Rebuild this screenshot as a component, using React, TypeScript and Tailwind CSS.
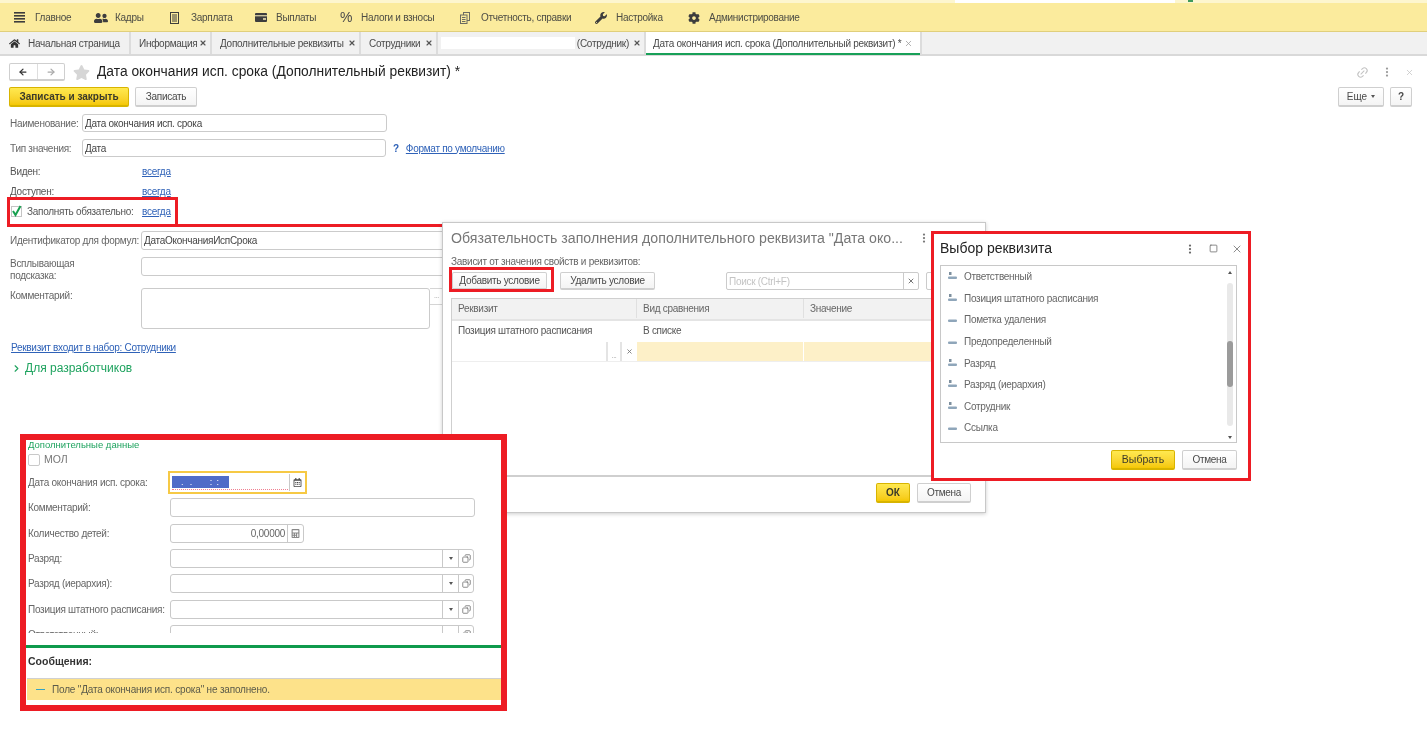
import React from 'react';
import { ArrowLeft, ArrowRight, ChevronRight, Copy, EllipsisVertical, Link2, Square, X } from 'lucide-react';
import { FaCalculator, FaCog, FaHome, FaRegCalendarAlt, FaStar, FaUserFriends, FaWrench } from 'react-icons/fa';

const NAV_ITEMS = [
  { label: 'Главное', width: 'w-[80px]', icon: <BarsIcon /> },
  { label: 'Кадры', width: 'w-[76px]', icon: <FaUserFriends size={14} className="text-[#3d3d3d]" /> },
  { label: 'Зарплата', width: 'w-[85px]', icon: <SheetIcon /> },
  { label: 'Выплаты', width: 'w-[85px]', icon: <CardIcon /> },
  { label: 'Налоги и взносы', width: 'w-[120px]', icon: <span className="text-[14px] tracking-normal text-[#4a4a4a]">%</span> },
  { label: 'Отчетность, справки', width: 'w-[135px]', icon: <DocsIcon /> },
  { label: 'Настройка', width: 'w-[93px]', icon: <FaWrench size={12} className="text-[#3d3d3d]" /> },
  { label: 'Администрирование', width: 'w-[120px]', icon: <FaCog size={12} className="text-[#3d3d3d]" /> },
];

const TABS = [
  { label: 'Информация', width: 'w-[81px]' },
  { label: 'Дополнительные реквизиты', width: 'w-[149px]' },
  { label: 'Сотрудники', width: 'w-[77px]' },
];

const ATTRIBUTES = [
  { name: 'Ответственный', ref: true },
  { name: 'Позиция штатного расписания', ref: true },
  { name: 'Пометка удаления', ref: false },
  { name: 'Предопределенный', ref: false },
  { name: 'Разряд', ref: true },
  { name: 'Разряд (иерархия)', ref: true },
  { name: 'Сотрудник', ref: true },
  { name: 'Ссылка', ref: false },
];

function BarsIcon() {
  return (
    <svg width="11" height="11" viewBox="0 0 11 11" className="text-[#3d3d3d]" fill="currentColor">
      <rect y="0" width="11" height="1.6" />
      <rect y="3" width="11" height="1.6" />
      <rect y="6" width="11" height="1.6" />
      <rect y="9" width="11" height="1.6" />
    </svg>
  );
}

function SheetIcon() {
  return (
    <svg width="9" height="12" viewBox="0 0 9 12" className="text-[#3d3d3d]">
      <rect x="0.5" y="0.5" width="8" height="11" fill="none" stroke="currentColor" />
      <path d="M2 3h5M2 5h5M2 7h5M2 9h5" stroke="currentColor" />
    </svg>
  );
}

function CardIcon() {
  return (
    <svg width="12" height="9" viewBox="0 0 12 9">
      <rect width="12" height="9" rx="1" fill="#3d3d3d" />
      <rect y="2" width="12" height="1.4" fill="#c9c09a" />
      <rect x="8" y="5" width="3" height="2" fill="#c9c09a" />
    </svg>
  );
}

function DocsIcon() {
  return (
    <svg width="10" height="12" viewBox="0 0 10 12" fill="none" stroke="#6b6b62">
      <rect x="3.5" y="0.5" width="6" height="8" />
      <rect x="0.5" y="3" width="6.5" height="8.5" fill="#fbeb9d" />
      <path d="M2 5.5h3.5M2 7.5h3.5M2 9.5h3.5" />
    </svg>
  );
}

function AttributeIcon({ hasRef }: { hasRef: boolean }) {
  return (
    <svg width="9" height="9" viewBox="0 0 9 9">
      {hasRef && <rect x="1" y="0" width="2.5" height="3" fill="#7d8f9e" />}
      <rect x="0" y="4.5" width="9" height="2.5" rx="1" fill="#8fa6ba" />
    </svg>
  );
}

function Button({ children, primary, className }: { children: React.ReactNode; primary?: boolean; className: string }) {
  return (
    <div
      className={
        (primary
          ? 'border-[#d8b400] bg-gradient-to-b from-[#ffe94f] to-[#f5c800] text-[#3a3a2a] '
          : 'border-[#cfcfcf] bg-gradient-to-b from-white to-[#f4f4f4] text-[#4a4a4a] ') +
        'flex items-center justify-center whitespace-nowrap rounded-[2px] border border-b-2 ' +
        className
      }
    >
      {children}
    </div>
  );
}

function Field({ className, children }: { className: string; children?: React.ReactNode }) {
  return (
    <div className={'flex items-center rounded-[3px] border border-[#cbcbcb] bg-white px-[2px] text-[#444] ' + className}>
      {children}
    </div>
  );
}

function LinkRow({ label, check }: { label: string; check?: boolean }) {
  return (
    <div className="flex h-[20px] items-center whitespace-nowrap text-[#555]">
      <div className="flex w-[133px] items-center pl-[1px]">
        {check && (
          <span className="mr-[5px] ml-[1px] flex h-[11px] w-[11px] items-center justify-center border border-[#c4c4c4]">
            <svg width="11" height="12" viewBox="0 0 11 12" className="shrink-0">
              <path d="M2 6 4.5 10 9.5 1" fill="none" stroke="#17a050" strokeWidth="2" />
            </svg>
          </span>
        )}
        {label}
      </div>
      <a className="text-[#2f62b8] underline">всегда</a>
    </div>
  );
}

function PickField({ label }: { label: string }) {
  return (
    <div className="flex h-[25.3px] items-start whitespace-nowrap text-[#666]">
      <div className="flex h-[19px] w-[142px] items-center">{label}</div>
      <div className="flex h-[19px] w-[304px] rounded-[3px] border border-[#c9c9c9] bg-white">
        <div className="flex-1" />
        <div className="flex w-[16px] items-center justify-center border-l border-[#c9c9c9]">
          <span className="border-x-[2.5px] border-t-[3px] border-x-transparent border-t-[#555]" />
        </div>
        <div className="flex w-[15px] items-center justify-center border-l border-[#c9c9c9]">
          <Copy size={9} className="-scale-x-100 text-[#666]" />
        </div>
      </div>
    </div>
  );
}

export default function App() {
  return (
    <div className="relative h-[752px] w-[1427px] overflow-hidden bg-white text-[10px] tracking-[-0.28px] blur-[0.35px] [font-family:'Liberation_Sans',Arial,sans-serif]">
      {/* section bar */}
      <div className="flex h-[3px] bg-[#fdf6cf]">
        <div className="ml-[955px] h-full w-[220px] bg-white" />
        <div className="ml-[13px] h-[2px] w-[5px] bg-[#3f9a5c]" />
      </div>
      <div className="flex h-[29px] items-center border-b border-[#e0cf7c] bg-[#fbeb9d] pt-[1px] pl-[14px]">
        {NAV_ITEMS.map((item) => (
          <div key={item.label} className={'flex items-center whitespace-nowrap text-[#4d4d45] ' + item.width}>
            <span className="flex w-[21px] items-center">{item.icon}</span>
            {item.label}
          </div>
        ))}
      </div>

      {/* open tabs */}
      <div className="flex h-[24px] whitespace-nowrap border-b-2 border-[#d9d9d9] bg-[#f1f1f1] text-[#4a4a4a]">
        <div className="flex w-[131px] items-center border-r-2 border-[#dcdcdc] pl-[9px]">
          <FaHome size={11} className="mr-[8px] text-[#333]" />
          Начальная страница
        </div>
        {TABS.map((tab) => (
          <div key={tab.label} className={'flex items-center justify-between border-r-2 border-[#dcdcdc] pr-[3px] pl-[8px] ' + tab.width}>
            {tab.label}
            <X size={8} strokeWidth={3.5} className="text-[#555]" />
          </div>
        ))}
        <div className="flex w-[208px] items-center justify-between border-r-2 border-[#dcdcdc] pr-[3px] pl-[3px]">
          <div className="h-[12px] w-[134px] bg-white" />
          <span className="mr-[4px] ml-auto">(Сотрудник)</span>
          <X size={8} strokeWidth={3.5} className="text-[#555]" />
        </div>
        <div className="flex h-[23px] w-[276px] items-center justify-between border-r-2 border-[#dcdcdc] bg-white px-[7px] shadow-[inset_0_-2px_0_#18a058]">
          Дата окончания исп. срока (Дополнительный реквизит) *
          <X size={9} strokeWidth={2} className="text-[#999]" />
        </div>
      </div>

      {/* form */}
      <div className="px-[9px]">
        <div className="mt-[7px] flex h-[18px] items-center">
          <div className="flex h-[18px] w-[56px] rounded-[2px] border border-b-2 border-[#cfcfcf] bg-white">
            <div className="flex flex-1 items-center justify-center border-r border-[#dedede]">
              <ArrowLeft size={10} strokeWidth={3} className="text-[#333]" />
            </div>
            <div className="flex flex-1 items-center justify-center">
              <ArrowRight size={10} strokeWidth={3} className="text-[#aaa]" />
            </div>
          </div>
          <FaStar size={17} className="mr-[7px] ml-[8px] text-[#d6d6d6]" />
          <h1 className="text-[13.8px] tracking-normal text-[#222]">Дата окончания исп. срока (Дополнительный реквизит) *</h1>
          <div className="ml-auto flex items-center gap-[12px] pr-[4px] text-[#c4c4c4]">
            <Link2 size={13} className="-rotate-45" />
            <EllipsisVertical size={12} strokeWidth={2.5} className="text-[#999]" />
            <X size={9} />
          </div>
        </div>

        <div className="mt-[6px] flex h-[20px]">
          <Button primary className="w-[120px] font-bold tracking-normal">Записать и закрыть</Button>
          <Button className="ml-[6px] w-[62px]">Записать</Button>
          <Button className="ml-auto w-[46px] tracking-normal">
            Еще <span className="ml-[4px] border-x-[2.5px] border-t-[3px] border-x-transparent border-t-[#555]" />
          </Button>
          <Button className="mr-[6px] ml-[6px] w-[22px] font-bold">?</Button>
        </div>

        <div className="mt-[7px] flex h-[18px] items-center whitespace-nowrap text-[#666]">
          <span className="w-[73px] pl-[1px]">Наименование:</span>
          <Field className="h-[18px] w-[305px]">Дата окончания исп. срока</Field>
        </div>
        <div className="mt-[7px] flex h-[18px] items-center whitespace-nowrap text-[#666]">
          <span className="w-[73px] pl-[1px]">Тип значения:</span>
          <Field className="h-[18px] w-[304px]">Дата</Field>
          <span className="ml-[7px] font-bold text-[#2f62b8]">?</span>
          <a className="ml-[7px] text-[#2f62b8] underline">Формат по умолчанию</a>
        </div>

        <div className="mt-[4px]">
          <LinkRow label="Виден:" />
          <LinkRow label="Доступен:" />
          <LinkRow label="Заполнять обязательно:" check />
        </div>

        <div className="mt-[10px] flex h-[19px] items-center whitespace-nowrap text-[#666]">
          <span className="w-[132px] pl-[1px]">Идентификатор для формул:</span>
          <Field className="h-[19px] w-[320px]">ДатаОкончанияИспСрока</Field>
        </div>
        <div className="mt-[7px] flex h-[19px] items-start text-[#666]">
          <span className="mt-[1px] w-[132px] pl-[1px] leading-[12px]">Всплывающая<br />подсказка:</span>
          <Field className="h-[19px] w-[320px]" />
        </div>
        <div className="mt-[12px] flex h-[40px] items-start text-[#666]">
          <span className="w-[132px] pl-[1px]">Комментарий:</span>
          <Field className="h-[41px] w-[289px]" />
          <div className="flex h-[17px] w-[14px] items-center justify-center border border-l-0 border-[#d5d5d5] text-[7px] text-[#999]">...</div>
        </div>

        <a className="mt-[13px] ml-[2px] block h-[14px] leading-[14px] text-[#2f62b8] underline">
          Реквизит входит в набор: Сотрудники
        </a>
        <div className="mt-[5px] flex h-[16px] items-center pl-[2px] text-[12px] tracking-normal text-[#1fa35f]">
          <ChevronRight size={11} strokeWidth={2.5} className="mr-[3px]" />
          Для разработчиков
        </div>
      </div>

      {/* annotation around the required checkbox */}
      <div className="absolute top-[197px] left-[7px] h-[30px] w-[171px] border-[3px] border-[#ed1c24]" />
      <div className="absolute top-[224px] left-[178px] h-[3px] w-[264px] bg-[#ed1c24]" />

      {/* condition dialog */}
      <div className="absolute top-[222px] left-[442px] flex h-[291px] w-[544px] flex-col whitespace-nowrap border border-[#c8c8c8] bg-white shadow-[0_1px_4px_rgba(0,0,0,0.2)]">
        <div className="flex h-[30px] items-center pt-[2px] pl-[8px] text-[14.15px] tracking-normal text-[#777]">
          Обязательность заполнения дополнительного реквизита "Дата око...
        </div>
        <div className="mt-[1px] pl-[8px] text-[#666]">Зависит от значения свойств и реквизитов:</div>
        <div className="mt-[3px] flex h-[18px] pl-[9px]">
          <Button className="w-[95px]">Добавить условие</Button>
          <Button className="ml-[13px] w-[95px]">Удалить условие</Button>
          <div className="ml-[71px] flex w-[193px] rounded-[2px] border border-[#cbcbcb] text-[#c4c4c4]">
            <span className="flex flex-1 items-center pl-[2px]">Поиск (Ctrl+F)</span>
            <span className="flex w-[15px] items-center justify-center border-l border-[#cbcbcb]">
              <X size={8} strokeWidth={3} className="text-[#777]" />
            </span>
          </div>
          <div className="ml-[7px] w-[20px] rounded-[2px] border border-[#cbcbcb]" />
        </div>
        <div className="mt-[8px] ml-[8px] h-[178px] w-[532px] border border-[#cfcfcf] text-[#555]">
          <div className="grid h-[22px] grid-cols-[185px_167px_1fr] border-b-2 border-[#e4e4e4] bg-[#f2f2f2] pb-[1px] text-[#666]">
            <div className="flex items-center border-r border-[#e0e0e0] pl-[6px]">Реквизит</div>
            <div className="flex items-center border-r border-[#e0e0e0] pl-[6px]">Вид сравнения</div>
            <div className="flex items-center pl-[6px]">Значение</div>
          </div>
          <div className="grid h-[21px] grid-cols-[185px_167px_1fr] pb-[2px]">
            <div className="flex items-center pl-[6px]">Позиция штатного расписания</div>
            <div className="flex items-center pl-[6px]">В списке</div>
          </div>
          <div className="grid h-[20px] grid-cols-[185px_167px_1fr] border-b border-[#eee] bg-[#fdf0c8]">
            <div className="flex bg-white">
              <div className="flex-1" />
              <div className="flex w-[16px] items-end justify-center border-x-2 border-[#e4e4e4] text-[7px] text-[#999]">...</div>
              <div className="flex w-[15px] items-center justify-center">
                <X size={7} strokeWidth={3} className="text-[#777]" />
              </div>
            </div>
            <div className="border-r border-white" />
          </div>
        </div>
        <div className="flex flex-1 items-center justify-end gap-[7px] border-t border-[#cfcfcf] pr-[14px] pb-[4px]">
          <Button primary className="h-[20px] w-[34px] font-bold tracking-normal">ОК</Button>
          <Button className="h-[20px] w-[54px]">Отмена</Button>
        </div>
      </div>
      <div className="absolute top-[267px] left-[449px] h-[25px] w-[105px] border-[3px] border-[#ed1c24]" />
      <div className="absolute top-[232px] left-[918px] text-[#777]">
        <EllipsisVertical size={12} strokeWidth={2.5} />
      </div>

      {/* attribute picker window */}
      <div className="absolute top-[231px] left-[931px] h-[250px] w-[320px] whitespace-nowrap border-[3px] border-[#ed1c24] bg-white pr-[11px] pl-[6px]">
        <div className="flex h-[29px] items-center text-[14px] tracking-normal text-[#222]">
          Выбор реквизита
          <div className="ml-auto flex items-center gap-[13px] text-[#666]">
            <EllipsisVertical size={12} strokeWidth={2.5} />
            <Square size={9} strokeWidth={2} />
            <X size={12} strokeWidth={1.5} className="mr-[-6px]" />
          </div>
        </div>
        <div className="relative mt-[2px] h-[178px] w-[297px] border border-[#c8c8c8]">
          {ATTRIBUTES.map((attr) => (
            <div key={attr.name} className="flex h-[21.6px] items-center text-[#666]">
              <span className="flex w-[23px] justify-start pl-[7px]"><AttributeIcon hasRef={attr.ref} /></span>
              {attr.name}
            </div>
          ))}
          <div className="absolute top-[5px] right-[3px] flex h-[168px] w-[7px] flex-col items-center">
            <span className="border-x-[2.5px] border-b-[3px] border-x-transparent border-b-[#555]" />
            <div className="mt-[9px] h-[143px] w-[6px] shrink-0 rounded-full bg-[#e9e9e9] pt-[58px]">
              <div className="h-[46px] w-[6px] rounded-full bg-[#9b9b9b]" />
            </div>
            <span className="mt-auto border-x-[2.5px] border-t-[3px] border-x-transparent border-t-[#555]" />
          </div>
        </div>
        <div className="mt-[7px] flex justify-end gap-[7px]">
          <Button primary className="h-[20px] w-[64px] text-[10.5px] tracking-normal">Выбрать</Button>
          <Button className="h-[20px] w-[55px]">Отмена</Button>
        </div>
      </div>

      {/* inset with the filled-in employee card */}
      <div className="absolute top-[434px] left-[20px] h-[277px] w-[487px] whitespace-nowrap border-[6px] border-[#ed1c24] bg-white">
        <div className="h-[193px] overflow-hidden pl-[2px]">
          <div className="h-[10px] text-[9.5px] leading-[10px] tracking-normal text-[#1fa35f]">Дополнительные данные</div>
          <div className="mt-[4px] flex h-[12px] items-center text-[10.5px] tracking-normal text-[#777]">
            <span className="mr-[4px] h-[12px] w-[12px] rounded-[2px] border border-[#c9c9c9]" />
            МОЛ
          </div>
          <div className="mt-[5px] flex h-[23px] items-center text-[#666]">
            <span className="w-[140px]">Дата окончания исп. срока:</span>
            <div className="relative flex h-[23px] w-[139px] items-center justify-end border-2 border-[#f6c945] bg-white">
              <div className="absolute top-[3px] left-[2px] h-[12px] w-[57px] whitespace-pre bg-[#4f6bc8] text-[9px] leading-[12px] text-white">    .   .        :  :</div>
              <div className="absolute top-[16px] left-[2px] w-[116px] border-b border-dotted border-[#f08090]" />
              <div className="flex h-[17px] w-[16px] items-center justify-center border-l border-[#c9c9c9]">
                <FaRegCalendarAlt size={9} className="text-[#444]" />
              </div>
            </div>
          </div>
          <div className="mt-[4px] flex h-[25px] items-start text-[#666]">
            <div className="flex h-[19px] w-[142px] items-center">Комментарий:</div>
            <Field className="h-[19px] w-[305px]" />
          </div>
          <div className="mt-[1px] flex h-[25px] items-start text-[#666]">
            <div className="flex h-[19px] w-[142px] items-center">Количество детей:</div>
            <div className="flex h-[19px] w-[134px] rounded-[3px] border border-[#c9c9c9]">
              <div className="flex flex-1 items-center justify-end pr-[2px]">0,00000</div>
              <div className="flex w-[16px] items-center justify-center border-l border-[#c9c9c9]">
                <FaCalculator size={9} className="text-[#888]" />
              </div>
            </div>
          </div>
          <PickField label="Разряд:" />
          <PickField label="Разряд (иерархия):" />
          <PickField label="Позиция штатного расписания:" />
          <PickField label="Ответственный:" />
        </div>
        <div className="mt-[12px] h-[3px] w-full bg-[#0f9a4c]" />
        <div className="mt-[6px] pl-[2px] text-[10.5px] font-bold tracking-normal text-[#333]">Сообщения:</div>
        <div className="mt-[8px] ml-[1px] flex h-[22px] items-center border-t border-[#d0d0d0] bg-[#fde28a] pl-[9px] tracking-[-0.18px] text-[#5a5a4a]">
          <span className="mr-[7px] h-[1.5px] w-[9px] bg-[#36a3c4]" />
          Поле "Дата окончания исп. срока" не заполнено.
        </div>
      </div>
    </div>
  );
}
